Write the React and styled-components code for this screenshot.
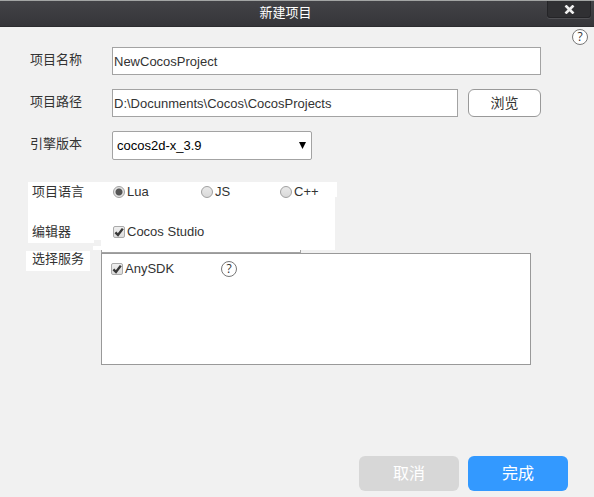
import React, { useState } from 'react';
import styled, { createGlobalStyle } from 'styled-components';

const svgUrl = (body, w, h) =>
  `url("data:image/svg+xml,${encodeURIComponent(
    `<svg xmlns='http://www.w3.org/2000/svg' viewBox='0 0 ${w} ${h}'>${body}</svg>`
  )}")`;

const tick = svgUrl(
  "<path d='M2.4 6.4L5 9L9.8 2.6' fill='none' stroke='#383838' stroke-width='2.4'/>",
  12,
  12
);
const arrow = svgUrl("<path d='M0 0H7L3.5 7Z' fill='#000'/>", 7, 7);

const GlobalStyle = createGlobalStyle`
  * { box-sizing: border-box; }
  body {
    margin: 0;
    background: #f1f1f1;
    color: #333;
    font: 13px/20px "Liberation Sans", "Noto Sans CJK SC", sans-serif;
  }
  button, input, select { font: inherit; margin: 0; }
`;

const Dialog = styled.form`
  display: flex;
  flex-direction: column;
  min-height: 100vh;
`;

const TitleBar = styled.header`
  display: flex;
  align-items: flex-start;
  height: 27px;
  padding-right: 3px;
  border-top: 1px solid #a3a5a4;
  border-bottom: 1px solid #2c2c2f;
  background: linear-gradient(#434347, #353539);
`;

const Title = styled.h1`
  flex: 1;
  margin: 0;
  padding: 2px 0 0 24px;
  color: #fff;
  font-size: 13px;
  font-weight: 400;
  line-height: 20px;
  text-align: center;
`;

const CloseButton = styled.button`
  display: flex;
  align-items: center;
  justify-content: center;
  width: 44px;
  height: 17px;
  padding: 0;
  border: 1px solid #242427;
  border-top: 0;
  border-radius: 0 0 3px 3px;
  background: #303033;
  box-shadow: 0 1px 0 #505054;
`;

const HelpBar = styled.div`
  display: flex;
  justify-content: flex-end;
  padding: 2px 6px;
`;

const HelpButton = styled.button`
  display: flex;
  align-items: center;
  justify-content: center;
  width: 16px;
  height: 16px;
  padding: 0;
  border: 1px solid #777;
  border-radius: 50%;
  background: #fff;
  color: #333;
  font: 12px/14px "Open Sans", sans-serif;
`;

const Fields = styled.div`
  display: flex;
  flex-direction: column;
  gap: 14px;
  padding: 0 53px 0 30px;
`;

const FieldRow = styled.div`
  display: flex;
`;

const FieldLabel = styled.label`
  flex: 0 0 82px;
  line-height: 26px;
`;

const TextField = styled.input`
  flex: 1;
  min-width: 0;
  height: 28px;
  padding: 0 1px;
  border: 1px solid #a3a3a3;
  border-radius: 0;
  background: #fff;
  color: #333;
`;

const BrowseButton = styled.button`
  width: 73px;
  height: 28px;
  margin-left: 10px;
  padding: 0;
  border: 1px solid #999;
  border-radius: 6px;
  background: #fff;
  color: #333;
  font-size: 14px;
`;

const VersionSelect = styled.select`
  width: 200px;
  height: 29px;
  padding: 0 20px 0 4px;
  border: 1px solid #a3a3a3;
  border-radius: 2px;
  appearance: none;
  background: #fff ${arrow} no-repeat right 5px center / 7px 7px;
  color: #000;
`;

const white = 'linear-gradient(#fff, #fff)';

/* The white backing is stepped along its right and lower left edges. */
const Options = styled.div`
  width: 309px;
  height: 68px;
  margin: 22px 0 0 28px;
  background:
    ${white} 0 0 / 309px 15px,
    ${white} 0 0 / 307px 58px,
    ${white} 0 0 / 66px 61px,
    ${white} 73px 0 / 234px 68px,
    ${white} 65px 64px / 8px 4px;
  background-repeat: no-repeat;
`;

const OptionRow = styled.fieldset`
  display: grid;
  grid-template-columns: 81px 88px 79px auto;
  justify-content: start;
  height: 20px;
  margin: 0 0 20px;
  padding: 0 0 0 4px;
  border: 0;
`;

const OptionName = styled.span``;

const Choice = styled.label`
  display: flex;
  align-items: center;
  gap: 2px;
  line-height: 20px;
  white-space: nowrap;
`;

const Radio = styled.input.attrs({ type: 'radio' })`
  flex: none;
  appearance: none;
  width: 12px;
  height: 12px;
  border: 1px solid #a0a0a0;
  border-radius: 50%;
  background: linear-gradient(#e9e9e9, #d9d9d9);
  &:checked {
    background: radial-gradient(circle, #555 0 3px, #e2e2e2 4px);
  }
`;

const CheckBox = styled.input.attrs({ type: 'checkbox' })`
  flex: none;
  appearance: none;
  width: 12px;
  height: 12px;
  border: 1px solid #aaa;
  border-radius: 2px;
  background: linear-gradient(#efefef, #dcdcdc);
  &:checked {
    background: ${tick} center / 12px 12px no-repeat, linear-gradient(#efefef, #dcdcdc);
  }
`;

const Services = styled.section`
  display: grid;
  grid-template-columns: 64px 1fr;
  column-gap: 11px;
  align-items: start;
  padding: 0 63px 0 26px;
`;

const ServicesName = styled.h2`
  margin: 1px 0 0;
  padding: 0 0 4px 6px;
  background: #fff;
  font-size: 13px;
  font-weight: 400;
  line-height: 16px;
`;

const ServiceEdge = styled.div`
  width: 200px;
  height: 3px;
  border: 1px solid #a3a3a3;
  border-top: 0;
  background: #fff;
`;

const ServiceBox = styled.div`
  display: flex;
  align-items: flex-start;
  height: 112px;
  padding: 5px 9px;
  border: 1px solid #999;
  background: #fff;
`;

const ServiceItem = styled.div`
  display: flex;
  align-items: center;
  justify-content: space-between;
  width: 126px;
`;

const Footer = styled.footer`
  display: flex;
  justify-content: flex-end;
  gap: 9px;
  margin-top: auto;
  padding: 20px 26px 6px;
`;

const ActionButton = styled.button`
  width: 100px;
  height: 35px;
  padding: 0;
  border: 0;
  border-radius: 6px;
  background: ${(p) => (p.$primary ? '#3399ff' : '#d7d7d7')};
  color: #fff;
  font-size: 16px;
`;

const languages = ['Lua', 'JS', 'C++'];

export default function App() {
  const [language, setLanguage] = useState('Lua');
  return (
    <>
      <GlobalStyle />
      <Dialog onSubmit={(e) => e.preventDefault()}>
        <TitleBar>
          <Title>新建项目</Title>
          <CloseButton type="button" aria-label="关闭">
            <svg width="11" height="9" viewBox="0 0 11 9">
              <path d="M1.5 0.5L9.5 8.5M9.5 0.5L1.5 8.5" stroke="#eee" strokeWidth="2.6" />
            </svg>
          </CloseButton>
        </TitleBar>
        <HelpBar>
          <HelpButton type="button">?</HelpButton>
        </HelpBar>
        <Fields>
          <FieldRow>
            <FieldLabel htmlFor="name">项目名称</FieldLabel>
            <TextField id="name" defaultValue="NewCocosProject" />
          </FieldRow>
          <FieldRow>
            <FieldLabel htmlFor="path">项目路径</FieldLabel>
            <TextField id="path" defaultValue="D:\Docunments\Cocos\CocosProjects" />
            <BrowseButton type="button">浏览</BrowseButton>
          </FieldRow>
          <FieldRow>
            <FieldLabel htmlFor="version">引擎版本</FieldLabel>
            <VersionSelect id="version">
              <option>cocos2d-x_3.9</option>
            </VersionSelect>
          </FieldRow>
        </Fields>
        <Options>
          <OptionRow aria-labelledby="language">
            <OptionName id="language">项目语言</OptionName>
            {languages.map((name) => (
              <Choice key={name}>
                <Radio
                  name="language"
                  checked={language === name}
                  onChange={() => setLanguage(name)}
                />
                {name}
              </Choice>
            ))}
          </OptionRow>
          <OptionRow aria-labelledby="editor">
            <OptionName id="editor">编辑器</OptionName>
            <Choice>
              <CheckBox defaultChecked />
              Cocos Studio
            </Choice>
          </OptionRow>
        </Options>
        <Services>
          <ServicesName>选择服务</ServicesName>
          <div>
            <ServiceEdge />
            <ServiceBox>
              <ServiceItem>
                <Choice>
                  <CheckBox defaultChecked />
                  AnySDK
                </Choice>
                <HelpButton type="button">?</HelpButton>
              </ServiceItem>
            </ServiceBox>
          </div>
        </Services>
        <Footer>
          <ActionButton type="button">取消</ActionButton>
          <ActionButton type="submit" $primary>完成</ActionButton>
        </Footer>
      </Dialog>
    </>
  );
}
